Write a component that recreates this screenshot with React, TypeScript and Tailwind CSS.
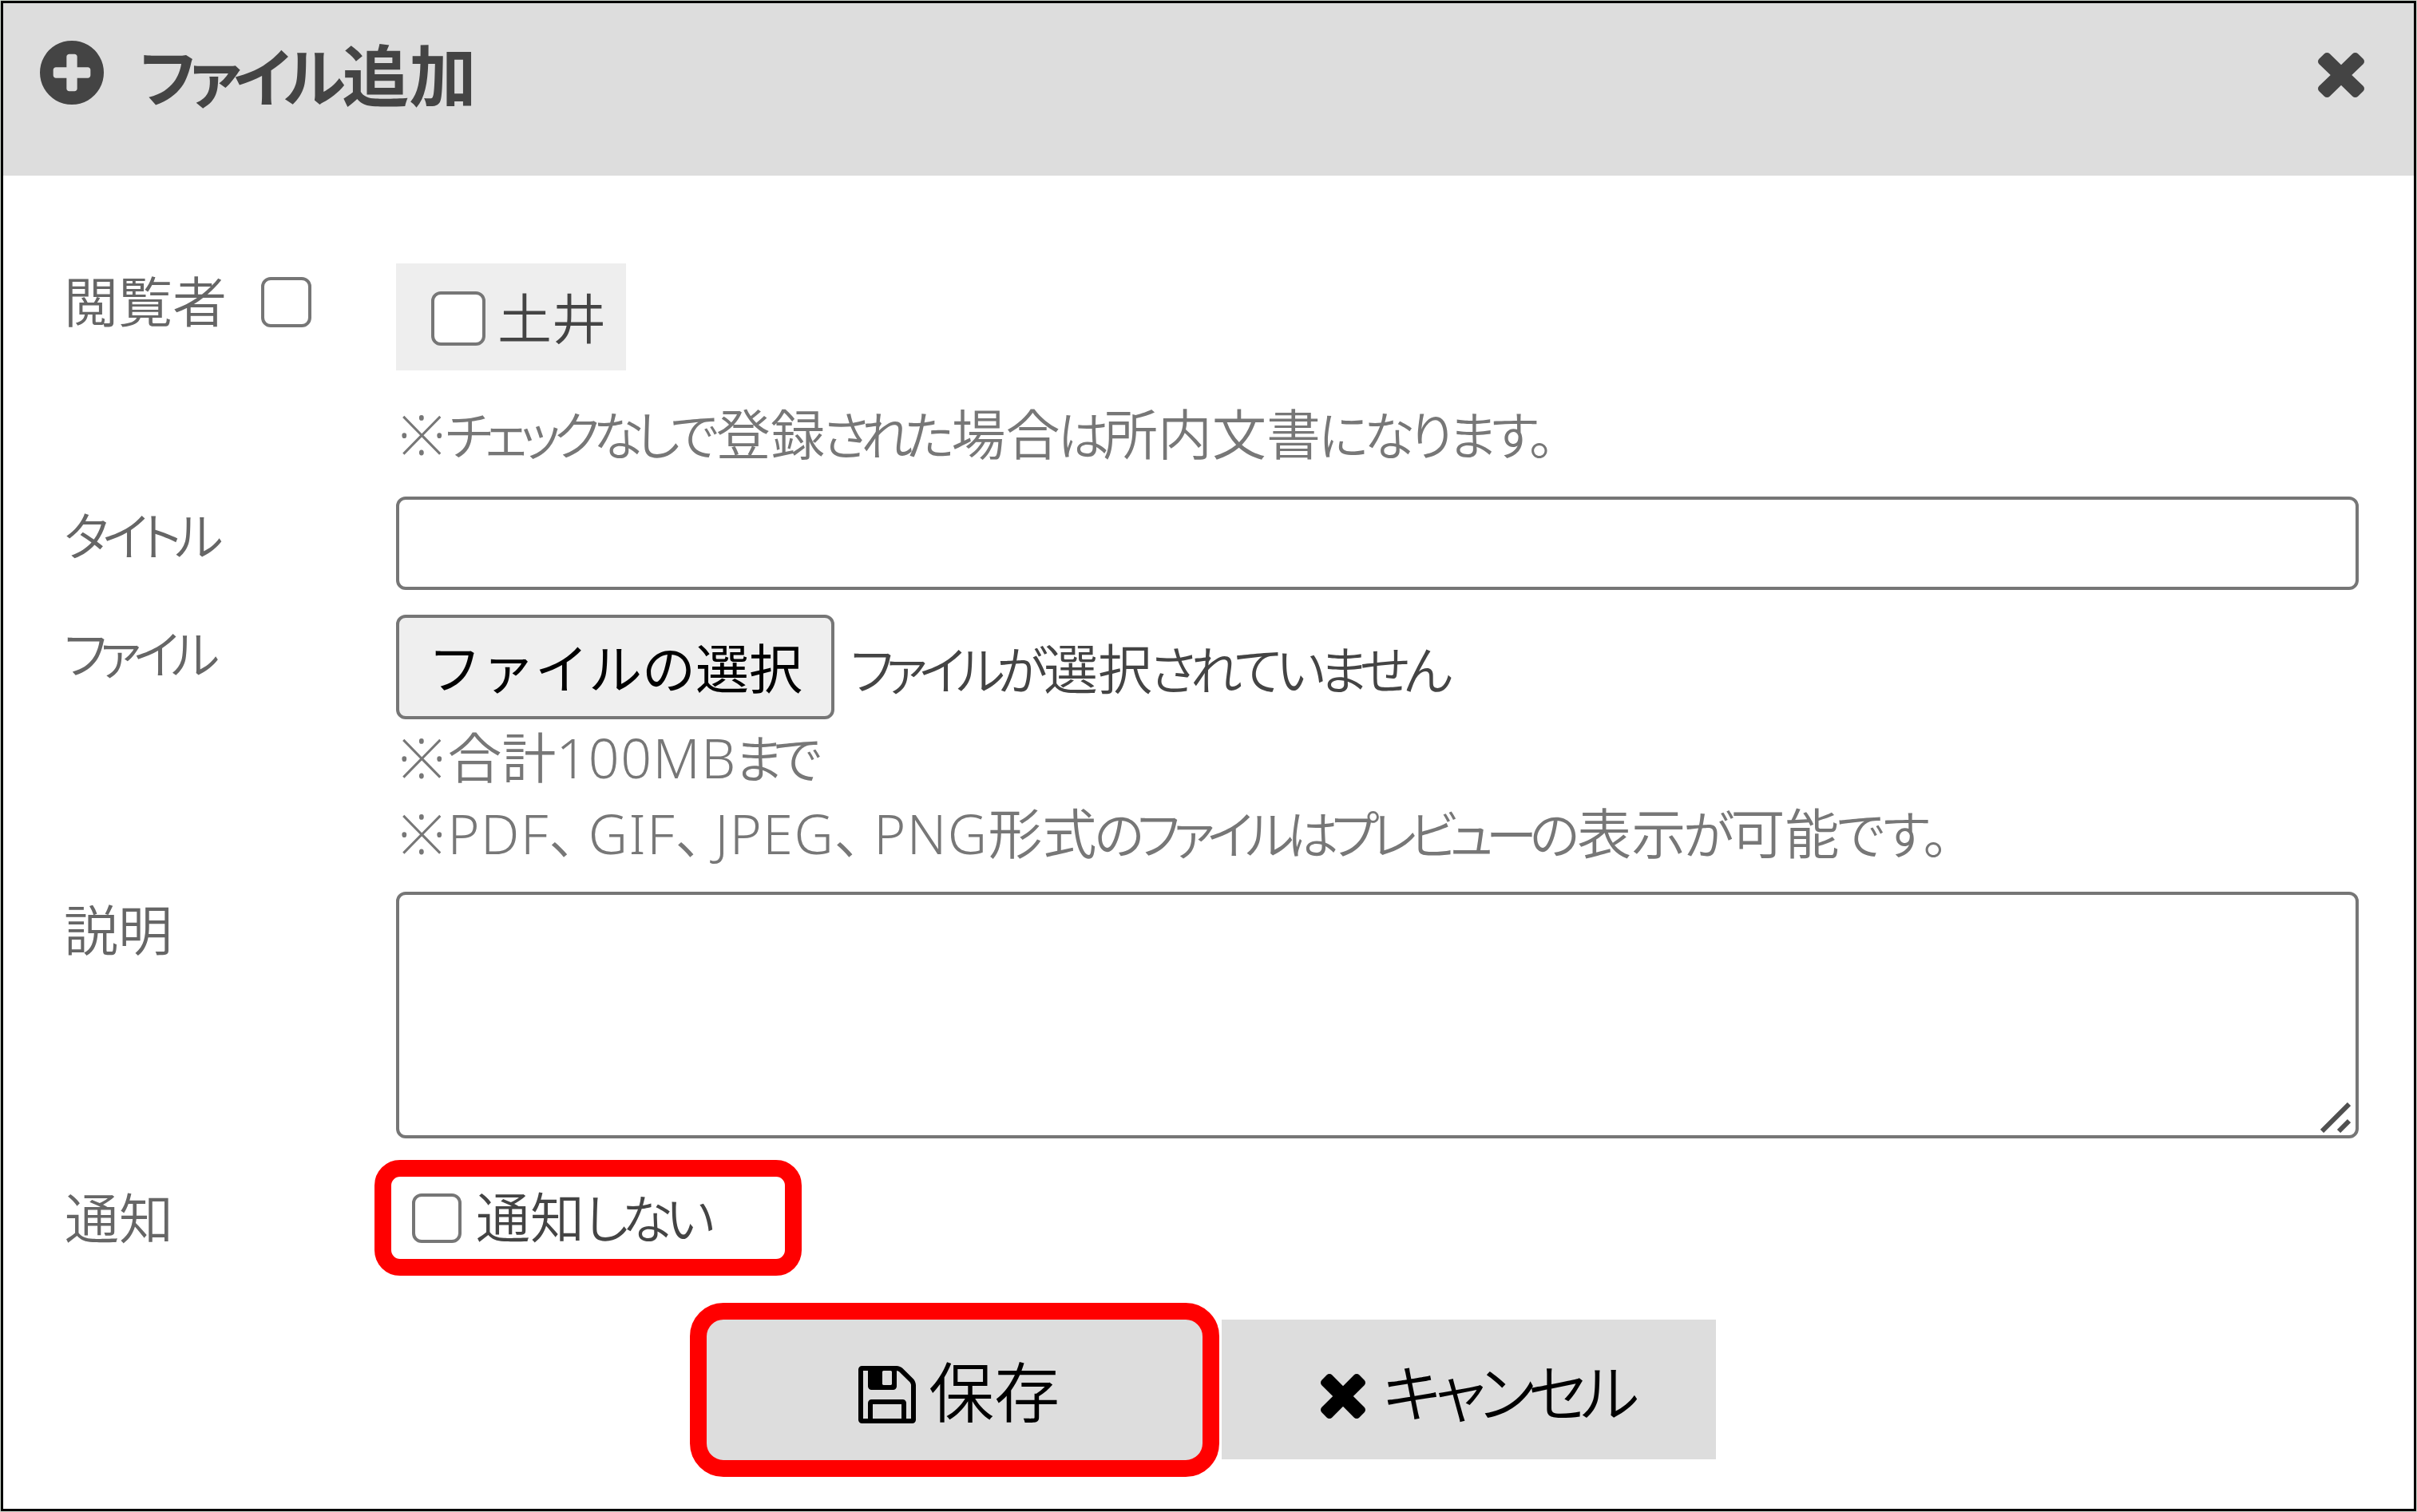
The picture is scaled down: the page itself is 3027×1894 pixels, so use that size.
import type { ReactNode } from "react";
import clsx from "clsx";

const CloseIcon = ({ className }: { className?: string }) => (
  <svg viewBox="302 366 1188 1188" preserveAspectRatio="none" fill="currentColor" className={className}>
    <path d="M1490 1322q0 40-28 68l-136 136q-28 28-68 28t-68-28l-294-294-294 294q-28 28-68 28t-68-28l-136-136q-28-28-28-68t28-68l294-294-294-294q-28-28-28-68t28-68l136-136q28-28 68-28t68 28l294 294 294-294q28-28 68-28t68 28l136 136q28 28 28 68t-28 68l-294 294 294 294q28 28 28 68z" />
  </svg>
);

const PlusCircleIcon = ({ className }: { className?: string }) => (
  <svg viewBox="128 128 1536 1536" fill="currentColor" className={className}>
    <path d="M1344 960v-128q0-26-19-45t-45-19h-256v-256q0-26-19-45t-45-19h-128q-26 0-45 19t-19 45v256h-256q-26 0-45 19t-19 45v128q0 26 19 45t45 19h256v256q0 26 19 45t45 19h128q26 0 45-19t19-45v-256h256q26 0 45-19t19-45zm320-64q0 209-103 385.500t-279.500 279.500-385.500 103-385.500-103-279.500-279.500-103-385.500 103-385.500 279.500-279.500 385.500-103 385.500 103 279.500 279.500 103 385.500z" />
  </svg>
);

const SaveIcon = ({ className }: { className?: string }) => (
  <svg viewBox="128 128 1536 1536" fill="currentColor" className={className}>
    <path d="M512 1536h768v-384h-768v384zm896 0h128v-896q0-14-10-38.500t-20-34.500l-281-281q-10-10-34-20t-39-10v416q0 40-28 68t-68 28h-576q-40 0-68-28t-28-68v-416h-128v1280h128v-416q0-40 28-68t68-28h832q40 0 68 28t28 68v416zm-384-928v-320q0-13-9.500-22.500t-22.500-9.500h-192q-13 0-22.500 9.500t-9.500 22.500v320q0 13 9.500 22.500t22.500 9.500h192q13 0 22.500-9.500t9.500-22.500zm640 32v928q0 40-28 68t-68 28h-1344q-40 0-68-28t-28-68v-1344q0-40 28-68t68-28h928q40 0 88 20t76 48l280 280q28 28 48 76t20 88z" />
  </svg>
);

const Checkbox = ({ className }: { className?: string }) => (
  <input
    type="checkbox"
    className={clsx("appearance-none shrink-0 rounded-[12px] border-4 border-[#767676] bg-white", className)}
  />
);

// Kana are set smaller and tighter than the kanji around them.
const Kana = ({ className = "tracking-[-9.5px]", children }: { className?: string; children: ReactNode }) => (
  <span className={clsx("mr-[5px] text-[0.95em] not-first:-ml-[3px] not-first:mr-[6px]", className)}>{children}</span>
);

const Latin = ({ children }: { children: ReactNode }) => <span className="tracking-[1.5px]">{children}</span>;

const Mark = () => <span className="mr-1 ml-1">※</span>;

const Comma = () => <span className="mr-[15px]">、</span>;

type RowProps = {
  label: ReactNode;
  className?: string;
  labelClassName?: string;
  children: ReactNode;
};

const Row = ({ label, className, labelClassName, children }: RowProps) => (
  <div className={clsx("flex items-start", className)}>
    <div className={clsx("flex w-[416px] shrink-0 items-center leading-[80px] text-[#666]", labelClassName)}>
      {label}
    </div>
    <div className="flex-1">{children}</div>
  </div>
);

const App = () => {
  return (
    <div className="h-[1894px] w-[3027px] bg-[#ccd4cc] p-px">
      <div className="flex h-full flex-col border-3 border-black bg-white font-['Noto_Sans','Noto_Sans_CJK_JP',sans-serif] text-[68px] font-[350] text-[#444] [font-feature-settings:'palt']">
        <header className="flex h-[216px] shrink-0 items-start justify-between bg-[#ddd] pr-[62px] pl-[46px]">
          <div className="flex items-start">
            <PlusCircleIcon className="mt-[47px] size-20" />
            <h1 className="mt-[41px] ml-[45px] text-[84px] leading-[100px] font-bold">
              <Kana className="tracking-[-9px]">ファイル</Kana>追加
            </h1>
          </div>
          <CloseIcon className="mt-[62px] h-[56px] w-[58px]" />
        </header>

        <form className="flex flex-col pt-[110px] pr-[69px] pl-[76px]">
          <Row
            className="h-[292px]"
            labelClassName="pt-2"
            label={
              <>
                <span className="w-[247px]">閲覧者</span>
                <Checkbox className="size-[63px]" />
              </>
            }
          >
            <label className="flex h-[134px] w-[288px] items-center bg-[#eee] pt-[3px] pl-11 leading-[80px]">
              <Checkbox className="size-[68px]" />
              <span className="ml-[15px]">土井</span>
            </label>
            <p className="mt-[40px] leading-[80px] text-[#777]">
              <Mark />
              <Kana className="tracking-[-9px]">チェックなしで</Kana>登録<Kana>された</Kana>場合
              <Kana className="tracking-[-13px]">は</Kana>所内文書
              <Kana className="tracking-[-5.5px]">になります。</Kana>
            </p>
          </Row>

          <Row className="h-[148px]" labelClassName="pt-[9px]" label={<Kana className="tracking-[-8px]">タイトル</Kana>}>
            <input type="text" className="block h-[117px] w-full rounded-[12px] border-4 border-[#767676]" />
          </Row>

          <Row className="h-[347px]" labelClassName="pt-[9px]" label={<Kana>ファイル</Kana>}>
            <div className="flex items-center">
              <button
                type="button"
                className="h-[131px] w-[549px] rounded-[12px] border-4 border-[#767676] bg-[#efefef] pt-[3px] text-[67px] font-normal text-black [font-feature-settings:normal]"
              >
                ファイルの選択
              </button>
              <span className="ml-5 pt-[5px] leading-[80px]">
                <Kana className="tracking-[-10px]">ファイルが</Kana>選択
                <Kana className="tracking-[-7px]">されていません</Kana>
              </span>
            </div>
            <p className="mt-[1px] leading-[93px] text-[#777]">
              <Mark />
              合計<Latin>100MB</Latin>
              <Kana className="tracking-[-10px]">まで</Kana>
              <br />
              <Mark />
              <Latin>PDF</Latin>
              <Comma />
              <Latin>GIF</Latin>
              <Comma />
              <Latin>JPEG</Latin>
              <Comma />
              <Latin>PNG</Latin>
              形式<Kana className="tracking-[-9px]">のファイルはプレビューの</Kana>表示
              <Kana className="tracking-[-10px]">が</Kana>可能<Kana className="tracking-[-2px]">です。</Kana>
            </p>
          </Row>

          <Row className="h-[336px]" labelClassName="pt-2" label="説明">
            <div className="relative h-[309px]">
              <textarea className="block h-full w-full resize-none rounded-[12px] border-4 border-[#767676]" />
              <svg
                viewBox="0 0 38 38"
                className="absolute right-[10px] bottom-[7px] size-[38px]"
                stroke="#505050"
                strokeWidth="6"
              >
                <path d="M2 36L36 2M23 36L36 23" />
              </svg>
            </div>
          </Row>

          <Row className="h-[179px]" labelClassName="pt-[33px] pl-px" label="通知">
            <label className="-ml-[27px] flex h-[145px] w-[535px] items-center rounded-[32px] border-[21px] border-[#f00] pl-[26px] leading-[80px]">
              <Checkbox className="size-[62px]" />
              <span className="ml-[18px]">
                通知<Kana className="tracking-[-8px]">しない</Kana>
              </span>
            </label>
          </Row>

          <div className="-ml-20 flex items-start pl-[864px] text-[82px] text-black">
            <button
              type="button"
              className="flex h-[218px] w-[663px] items-center rounded-[42px] border-[21px] border-[#f00] bg-[#ddd] pt-3 pl-[190px]"
            >
              <SaveIcon className="size-[72px]" />
              <span className="-mt-2 ml-4 leading-[90px]">保存</span>
            </button>
            <button type="button" className="mt-[21px] ml-[3px] flex h-[175px] w-[619px] items-center bg-[#ddd] pt-[10px] pl-[124px]">
              <CloseIcon className="mt-[7px] size-[56px]" />
              <span className="-mt-1 ml-[22px] leading-[90px]">
                <Kana className="tracking-[-8px]">キャンセル</Kana>
              </span>
            </button>
          </div>
        </form>
      </div>
    </div>
  );
};

export default App;
